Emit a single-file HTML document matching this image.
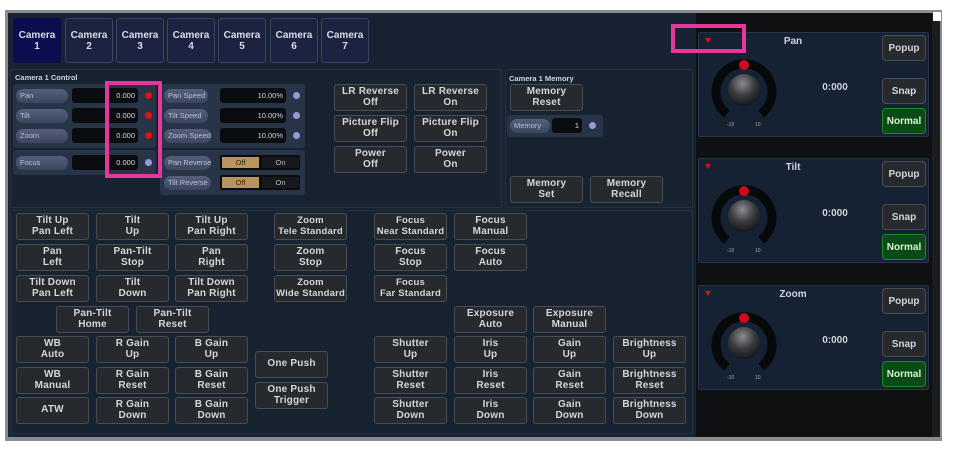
<!DOCTYPE html>
<html><head><meta charset="utf-8"><style>
*{box-sizing:border-box;margin:0;padding:0}
body{width:958px;height:453px;background:#fff;position:relative;overflow:hidden;font-family:"Liberation Sans","DejaVu Sans",sans-serif;}
.a{position:absolute;white-space:nowrap}
.frame{left:5px;top:10px;width:937px;height:431px;background:#8a8c90}
.main{left:8px;top:13px;width:688px;height:424px;background:#172232}
.right{left:696px;top:13px;width:236px;height:424px;background:#0e1012}
.sb{left:932px;top:13px;width:8px;height:424px;background:#1a1c20}
.tab{height:45px;width:48px;border:1px solid #3a4468;border-radius:3px;background:#1c2340;color:#d8dce8;font-size:10px;font-weight:bold;text-align:center;line-height:11px;padding-top:11px}
.tab.sel{background:#0b0e4e;border-color:#0b0e4e}
.sec{border:1px solid #22303f;background:#182332}
.btn{width:73px;height:27px;border:1px solid #4a4e52;border-radius:3px;background:#262a2e;color:#d4d6d8;font-size:10px;font-weight:bold;text-align:center;line-height:10.5px;display:flex;align-items:center;justify-content:center;letter-spacing:0.2px}
.lbl{color:#d0d4dc;font-size:7.5px;font-weight:bold}
.grp{background:#283448;border-radius:3px}
.pill{height:14px;border-radius:7px;background:linear-gradient(#56607a,#3c4560);color:#b8c0d4;font-size:7.5px;padding-left:4px;line-height:14px;overflow:hidden}
.val{height:15px;background:#0a0c10;border-radius:3px;color:#d8d8d8;font-size:7.5px;text-align:right;padding-right:3px;line-height:15px}
.dot{width:7px;height:7px;border-radius:50%}
.r{background:#e01010}.p{background:#9a98d8}
.kp{left:698px;width:231px;height:105px;border:1px solid #26354a;background:#152234;border-radius:2px}
.sbt{width:44px;height:26px;border:1px solid #4a4e52;border-radius:4px;background:#262a2e;color:#d4d6d8;font-size:10px;font-weight:bold;display:flex;align-items:center;justify-content:center}
.grn{background:#0a4a14;border-color:#1a8a2a;color:#d8f0d8}
.pink{border:4px solid #e4399a}
</style></head><body>
<div class="a frame"></div>
<div class="a main"></div>
<div class="a right"></div>
<div class="a sb"></div>
<div class="a" style="left:933px;top:12px;width:8px;height:9px;background:#fff"></div>

<div class="a tab sel" style="left:13px;top:18px">Camera<br>1</div>
<div class="a tab" style="left:65px;top:18px">Camera<br>2</div>
<div class="a tab" style="left:116px;top:18px">Camera<br>3</div>
<div class="a tab" style="left:167px;top:18px">Camera<br>4</div>
<div class="a tab" style="left:218px;top:18px">Camera<br>5</div>
<div class="a tab" style="left:270px;top:18px">Camera<br>6</div>
<div class="a tab" style="left:321px;top:18px">Camera<br>7</div>

<div class="a sec" style="left:10px;top:69px;width:492px;height:139px"></div>
<div class="a sec" style="left:505px;top:69px;width:188px;height:139px"></div>
<div class="a sec" style="left:10px;top:210px;width:683px;height:224px"></div>

<div class="a lbl" style="left:15px;top:73px">Camera 1 Control</div>
<div class="a grp" style="left:13px;top:84px;width:143px;height:64px"></div>
<div class="a grp" style="left:13px;top:150px;width:143px;height:25px"></div>
<div class="a grp" style="left:160px;top:84px;width:145px;height:64px"></div>
<div class="a grp" style="left:160px;top:150px;width:145px;height:45px"></div>

<div class="a pill" style="left:16px;top:89px;width:52px">Pan</div>
<div class="a val" style="left:72px;top:88px;width:66px">0.000</div><div class="a dot r" style="left:145px;top:92px"></div>
<div class="a pill" style="left:16px;top:109px;width:52px">Tilt</div>
<div class="a val" style="left:72px;top:108px;width:66px">0.000</div><div class="a dot r" style="left:145px;top:112px"></div>
<div class="a pill" style="left:16px;top:129px;width:52px">Zoom</div>
<div class="a val" style="left:72px;top:128px;width:66px">0.000</div><div class="a dot r" style="left:145px;top:132px"></div>
<div class="a pill" style="left:16px;top:156px;width:52px">Focus</div>
<div class="a val" style="left:72px;top:155px;width:66px">0.000</div><div class="a dot p" style="left:145px;top:159px"></div>

<div class="a pill" style="left:164px;top:89px;width:44px">Pan Speed</div>
<div class="a val" style="left:220px;top:88px;width:66px">10.00%</div><div class="a dot p" style="left:293px;top:92px"></div>
<div class="a pill" style="left:164px;top:109px;width:44px">Tilt Speed</div>
<div class="a val" style="left:220px;top:108px;width:66px">10.00%</div><div class="a dot p" style="left:293px;top:112px"></div>
<div class="a pill" style="left:164px;top:129px;width:47px">Zoom Speed</div>
<div class="a val" style="left:220px;top:128px;width:66px">10.00%</div><div class="a dot p" style="left:293px;top:132px"></div>
<div class="a pill" style="left:164px;top:156px;width:47px">Pan Reverse</div>
<div class="a" style="left:220px;top:155px;width:80px;height:15px;background:#0a0c10;border-radius:2px"></div>
<div class="a" style="left:222px;top:157px;width:37px;height:11px;background:#b8955a;color:#3a2a10;font-size:7.5px;text-align:center;line-height:11px">Off</div>
<div class="a" style="left:262px;top:157px;width:37px;height:11px;background:#16181c;color:#bbb;font-size:7.5px;text-align:center;line-height:11px">On</div>
<div class="a pill" style="left:164px;top:176px;width:47px">Tilt Reverse</div>
<div class="a" style="left:220px;top:175px;width:80px;height:15px;background:#0a0c10;border-radius:2px"></div>
<div class="a" style="left:222px;top:177px;width:37px;height:11px;background:#b8955a;color:#3a2a10;font-size:7.5px;text-align:center;line-height:11px">Off</div>
<div class="a" style="left:262px;top:177px;width:37px;height:11px;background:#16181c;color:#bbb;font-size:7.5px;text-align:center;line-height:11px">On</div>

<div class="a btn" style="left:334px;top:84px">LR Reverse<br>Off</div>
<div class="a btn" style="left:414px;top:84px">LR Reverse<br>On</div>
<div class="a btn" style="left:334px;top:115px">Picture Flip<br>Off</div>
<div class="a btn" style="left:414px;top:115px">Picture Flip<br>On</div>
<div class="a btn" style="left:334px;top:146px">Power<br>Off</div>
<div class="a btn" style="left:414px;top:146px">Power<br>On</div>

<div class="a lbl" style="left:509px;top:74px">Camera 1 Memory</div>
<div class="a btn" style="left:510px;top:84px">Memory<br>Reset</div>
<div class="a grp" style="left:507px;top:115px;width:96px;height:22px"></div>
<div class="a pill" style="left:510px;top:119px;width:40px">Memory</div>
<div class="a val" style="left:552px;top:118px;width:30px">1</div><div class="a dot p" style="left:589px;top:122px"></div>
<div class="a btn" style="left:510px;top:176px">Memory<br>Set</div>
<div class="a btn" style="left:590px;top:176px">Memory<br>Recall</div>

<div class="a btn" style="left:16px;top:213px">Tilt Up<br>Pan Left</div>
<div class="a btn" style="left:96px;top:213px">Tilt<br>Up</div>
<div class="a btn" style="left:175px;top:213px">Tilt Up<br>Pan Right</div>
<div class="a btn" style="left:16px;top:244px">Pan<br>Left</div>
<div class="a btn" style="left:96px;top:244px">Pan-Tilt<br>Stop</div>
<div class="a btn" style="left:175px;top:244px">Pan<br>Right</div>
<div class="a btn" style="left:16px;top:275px">Tilt Down<br>Pan Left</div>
<div class="a btn" style="left:96px;top:275px">Tilt<br>Down</div>
<div class="a btn" style="left:175px;top:275px">Tilt Down<br>Pan Right</div>
<div class="a btn" style="left:56px;top:306px">Pan-Tilt<br>Home</div>
<div class="a btn" style="left:136px;top:306px">Pan-Tilt<br>Reset</div>
<div class="a btn" style="left:16px;top:336px">WB<br>Auto</div>
<div class="a btn" style="left:96px;top:336px">R Gain<br>Up</div>
<div class="a btn" style="left:175px;top:336px">B Gain<br>Up</div>
<div class="a btn" style="left:16px;top:367px">WB<br>Manual</div>
<div class="a btn" style="left:96px;top:367px">R Gain<br>Reset</div>
<div class="a btn" style="left:175px;top:367px">B Gain<br>Reset</div>
<div class="a btn" style="left:16px;top:397px">ATW</div>
<div class="a btn" style="left:96px;top:397px">R Gain<br>Down</div>
<div class="a btn" style="left:175px;top:397px">B Gain<br>Down</div>
<div class="a btn" style="left:255px;top:351px">One Push</div>
<div class="a btn" style="left:255px;top:382px">One Push<br>Trigger</div>

<div class="a btn" style="left:274px;top:213px;font-size:9.5px">Zoom<br>Tele Standard</div>
<div class="a btn" style="left:274px;top:244px">Zoom<br>Stop</div>
<div class="a btn" style="left:274px;top:275px;font-size:9.5px">Zoom<br>Wide Standard</div>
<div class="a btn" style="left:374px;top:213px;font-size:9.5px">Focus<br>Near Standard</div>
<div class="a btn" style="left:374px;top:244px">Focus<br>Stop</div>
<div class="a btn" style="left:374px;top:275px;font-size:9.5px">Focus<br>Far Standard</div>
<div class="a btn" style="left:454px;top:213px">Focus<br>Manual</div>
<div class="a btn" style="left:454px;top:244px">Focus<br>Auto</div>
<div class="a btn" style="left:454px;top:306px">Exposure<br>Auto</div>
<div class="a btn" style="left:533px;top:306px">Exposure<br>Manual</div>
<div class="a btn" style="left:374px;top:336px">Shutter<br>Up</div>
<div class="a btn" style="left:374px;top:367px">Shutter<br>Reset</div>
<div class="a btn" style="left:374px;top:397px">Shutter<br>Down</div>
<div class="a btn" style="left:454px;top:336px">Iris<br>Up</div>
<div class="a btn" style="left:454px;top:367px">Iris<br>Reset</div>
<div class="a btn" style="left:454px;top:397px">Iris<br>Down</div>
<div class="a btn" style="left:533px;top:336px">Gain<br>Up</div>
<div class="a btn" style="left:533px;top:367px">Gain<br>Reset</div>
<div class="a btn" style="left:533px;top:397px">Gain<br>Down</div>
<div class="a btn" style="left:613px;top:336px">Brightness<br>Up</div>
<div class="a btn" style="left:613px;top:367px">Brightness<br>Reset</div>
<div class="a btn" style="left:613px;top:397px">Brightness<br>Down</div>

<div class="a kp" style="top:32px"></div>
<div class="a kp" style="top:158px"></div>
<div class="a kp" style="top:285px"></div>
<svg class="a" style="left:0;top:0" width="958" height="453">
<defs><radialGradient id="g" cx="0.45" cy="0.3" r="0.75"><stop offset="0" stop-color="#8a8c90"/><stop offset="0.5" stop-color="#3a3c40"/><stop offset="1" stop-color="#101114"/></radialGradient></defs>
<g font-family="Liberation Sans,DejaVu Sans,sans-serif" font-weight="bold" fill="#d0d4dc">
<g>
<path d="M705 38 l6 0 l-3 5z" fill="#e01010"/>
<text x="793" y="44" font-size="10" text-anchor="middle">Pan</text>
<path d="M727 114 A28 28 0 1 1 761 114" stroke="#06080a" stroke-width="9" fill="none"/>
<circle cx="744" cy="90" r="16" fill="url(#g)"/>
<circle cx="744" cy="65" r="5" fill="#d00a1a"/>
<text x="727" y="126" font-size="5" font-weight="normal" fill="#aaa">-10</text><text x="755" y="126" font-size="5" font-weight="normal" fill="#aaa">10</text>
<text x="835" y="90" font-size="10" text-anchor="middle">0:000</text>
</g>
<g transform="translate(0,126)">
<path d="M705 38 l6 0 l-3 5z" fill="#e01010"/>
<text x="793" y="44" font-size="10" text-anchor="middle">Tilt</text>
<path d="M727 114 A28 28 0 1 1 761 114" stroke="#06080a" stroke-width="9" fill="none"/>
<circle cx="744" cy="90" r="16" fill="url(#g)"/>
<circle cx="744" cy="65" r="5" fill="#d00a1a"/>
<text x="727" y="126" font-size="5" font-weight="normal" fill="#aaa">-10</text><text x="755" y="126" font-size="5" font-weight="normal" fill="#aaa">10</text>
<text x="835" y="90" font-size="10" text-anchor="middle">0:000</text>
</g>
<g transform="translate(0,253)">
<path d="M705 38 l6 0 l-3 5z" fill="#e01010"/>
<text x="793" y="44" font-size="10" text-anchor="middle">Zoom</text>
<path d="M727 114 A28 28 0 1 1 761 114" stroke="#06080a" stroke-width="9" fill="none"/>
<circle cx="744" cy="90" r="16" fill="url(#g)"/>
<circle cx="744" cy="65" r="5" fill="#d00a1a"/>
<text x="727" y="126" font-size="5" font-weight="normal" fill="#aaa">-10</text><text x="755" y="126" font-size="5" font-weight="normal" fill="#aaa">10</text>
<text x="835" y="90" font-size="10" text-anchor="middle">0:000</text>
</g>
</g></svg>
<div class="a sbt" style="left:882px;top:35px">Popup</div>
<div class="a sbt" style="left:882px;top:78px">Snap</div>
<div class="a sbt grn" style="left:882px;top:108px">Normal</div>
<div class="a sbt" style="left:882px;top:161px">Popup</div>
<div class="a sbt" style="left:882px;top:204px">Snap</div>
<div class="a sbt grn" style="left:882px;top:234px">Normal</div>
<div class="a sbt" style="left:882px;top:288px">Popup</div>
<div class="a sbt" style="left:882px;top:331px">Snap</div>
<div class="a sbt grn" style="left:882px;top:361px">Normal</div>

<div class="a pink" style="left:105px;top:81px;width:57px;height:97px"></div>
<div class="a pink" style="left:671px;top:24px;width:75px;height:29px"></div>
</body></html>
